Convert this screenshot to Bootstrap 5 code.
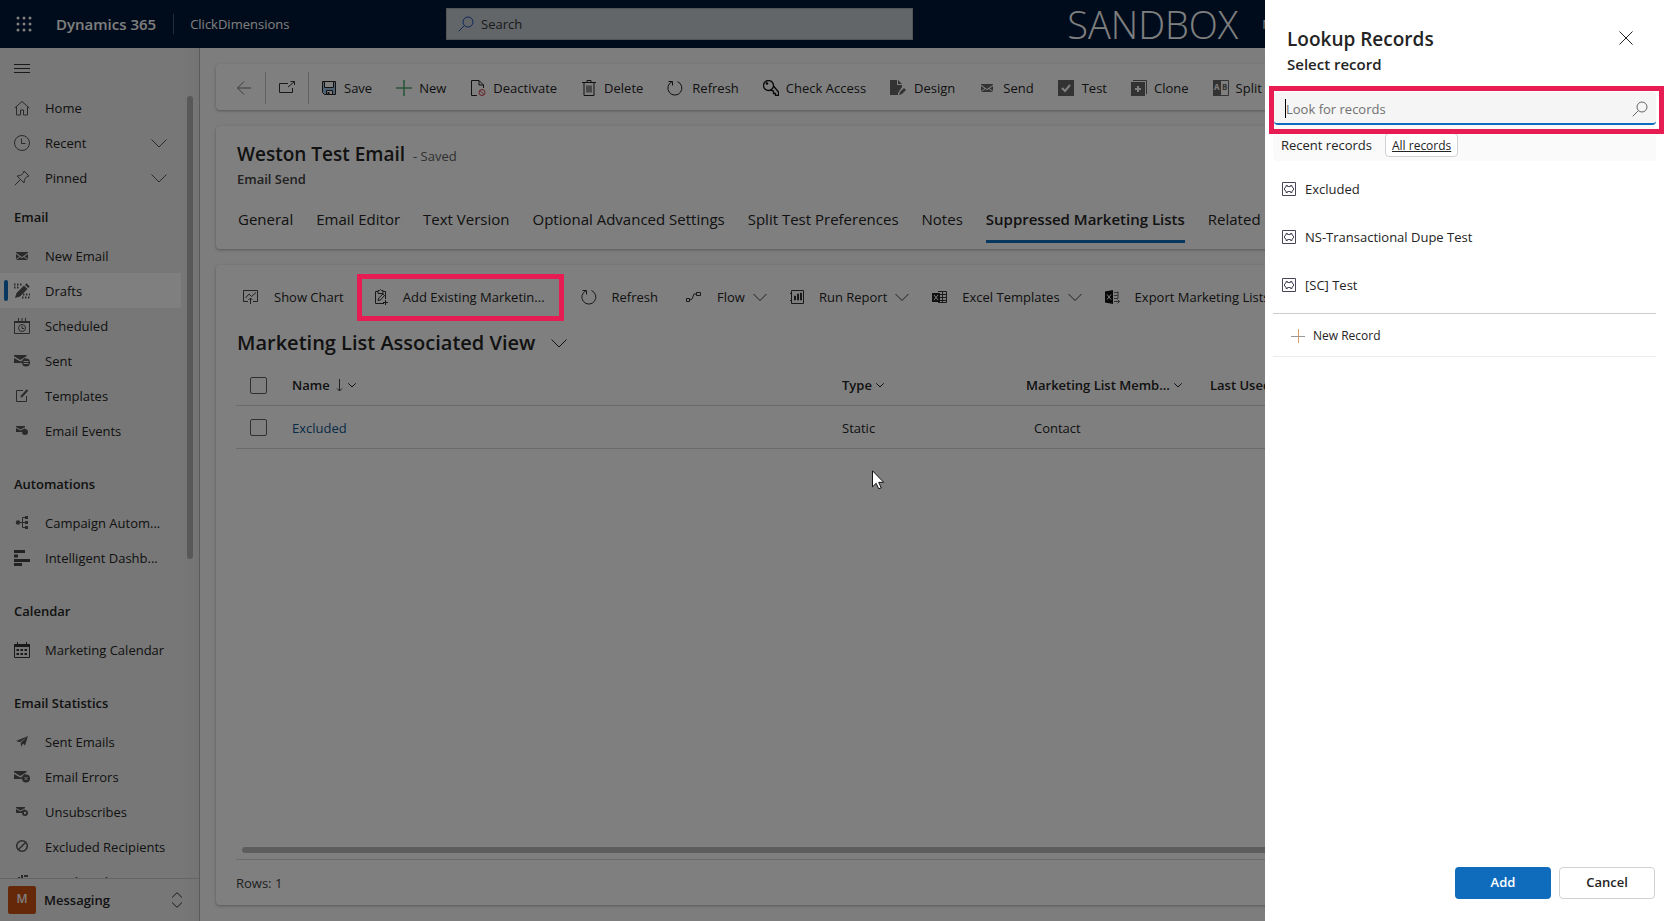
<!DOCTYPE html>
<html lang="en">
<head>
<meta charset="utf-8">
<meta name="viewport" content="width=device-width, initial-scale=1">
<title>Weston Test Email - Dynamics 365</title>
<link href="https://cdn.jsdelivr.net/npm/bootstrap@5.3.0/dist/css/bootstrap.min.css" rel="stylesheet">
<style>
:root { --navy:#001838; --blue:#0f6cbd; --pink:#e61c53; --ink:#242424; --rule:#d6d6d6; }
body { font-family:"Open Sans","Noto Sans",sans-serif; font-size:13px; line-height:20px; color:var(--ink); background:#fafafa; }
svg { flex:none; display:block; }
button { color:inherit; font:inherit; }
.app { height:100vh; }
.plain-btn { border:0; background:none; padding:0; display:inline-flex; align-items:center; white-space:nowrap; }

/* top bar */
.topbar { height:48px; background:var(--navy); color:#fff; }
.brand { font-size:15px; font-weight:600; margin-left:24px; }
.brand-rule { width:1px; height:20px; background:#46586f; margin:0 16px 0 17px; }
.find-box { left:446px; width:467px; height:32px; background:#c5ccd3; border:1px solid #a8a8a8; padding:0 8px; gap:4px; }
.find-box input { border:0; background:none; padding:0; color:#242424; font-size:13px; width:100%; }
.find-box input::placeholder { color:#333; opacity:1; }
.env-name { font-size:38px; font-weight:300; line-height:46px; }
.env-block { margin-right:401px; gap:24px; white-space:nowrap; }

/* site map */
.sitemap { width:200px; background:linear-gradient(90deg,#efefef 180px,#e8e8e8); border-right:1px solid #b4b4b4; }
.sitemap-scroll { overflow:hidden; }
.menu-toggle { height:42px; padding-left:14px; }
.site-link { height:35px; padding-left:14px; gap:15px; color:var(--ink); text-decoration:none; width:181px; font-size:13px; white-space:nowrap; }
.site-link .expander { margin-right:14px; }
.site-link.on { background:#fff; position:relative; }
.site-link.on::before { content:""; position:absolute; left:4px; top:7px; width:4px; height:21px; border-radius:2px; background:var(--blue); }
.site-link svg { color:#555; }
.site-head { height:43px; line-height:42px; padding:1px 0 0 14px; font-size:13px; font-weight:600; margin:14px 0 0; }
.site-head.first { margin-top:0; }
.sitemap-thumb { position:absolute; right:6px; top:48px; width:6px; height:463px; border-radius:3px; background:#b0b0b0; }
.area-switch { height:44px; border-top:1px solid #c8c8c8; padding:0 16px 0 8px; font-weight:600; font-size:13px; }
.area-tile { width:28px; height:28px; border-radius:2px; background:#ca5010; color:#fff; font-size:12px; line-height:26px; text-align:center; margin-right:8px; }

/* work area */
.work { padding:16px; gap:16px; overflow:hidden; }
.pane { background:#fff; border-radius:4px; box-shadow:0 1px 3px rgba(0,0,0,.3); }
.cmds { height:46px; padding:2px 0 0 20px; overflow:hidden; }
.cmds .plain-btn { gap:7px; margin-right:24px; }
.cmds .nav-btn { margin-right:13px; }
.cmd-rule { width:1px; height:32px; background:#c4c4c4; margin-right:13px; }
.record { padding:16px 21px 0; height:123px; }
.record h1 { font-size:19px; font-weight:600; line-height:24px; margin:0; }
.saved { color:#616161; }
.record-type { font-weight:600; color:#424242; line-height:26px; }
.tabs { gap:23px; padding:16px 0 0 1px; }
.tabs a { color:var(--ink); text-decoration:none; font-size:15px; line-height:22px; white-space:nowrap; height:35px; }
.tabs a.on { font-weight:600; border-bottom:3px solid var(--blue); }
.grid-pane { padding:0 20px; }
.grid-cmds { height:64px; padding-left:7px; white-space:nowrap; }
.grid-cmds .plain-btn { gap:15px; margin-right:28px; }
.grid-cmds .chart-btn { margin-right:30px; }
.grid-cmds .drop { gap:8px; margin-right:23px; }
.grid-cmds .drop span { margin-left:7px; }
.callout { position:relative; }
.callout::after { content:""; position:absolute; border:5px solid var(--pink); z-index:1046; pointer-events:none; }
.add-existing::after { inset:-13px -19px -14px -17px; }
.view-name { font-size:20px; font-weight:600; line-height:28px; padding-left:1px; gap:16px; margin-bottom:7px; }
.rows { table-layout:fixed; margin:0; --bs-table-bg:transparent; font-size:13px; width:1450px; color:var(--ink); }
.rows > :not(caption) > * > * { padding:2px 12px 0; border-bottom:1px solid var(--rule); white-space:nowrap; vertical-align:middle; color:var(--ink); }
.rows th { height:41px; font-weight:600; }
.rows td { height:43px; }
.rows a { color:#0f548c; text-decoration:none; }
.rows .form-check-input { width:17px; height:17px; margin:0 0 0 2px; border:1px solid #616161; border-radius:2px; display:block; }
.rows td.inset-cell { padding-left:20px; }
.col-check { width:44px; }
.col-name { width:550px; }
.col-type { width:184px; }
.h-thumb { height:6px; border-radius:3px; background:#bbb; margin:0 0 6px 6px; }
.row-count { border-top:1px solid var(--rule); height:46px; line-height:46px; color:#424242; }

/* overlay and lookup panel */
.scrim { position:fixed; inset:0; background:rgba(0,0,0,.5); z-index:1040; }
.lookup { position:fixed; top:0; right:0; bottom:0; width:410px; background:#fff; z-index:1045; padding:0 19px 0 8px; }
.lookup-top { padding:26px 23px 0 14px; height:92px; }
.lookup-top h2 { font-size:19px; font-weight:600; line-height:26px; margin:0; }
.lookup-top p { font-size:15px; font-weight:600; line-height:24px; margin:0; }
.look-box { height:33px; margin-left:1px; background:#f5f5f5; border-bottom:2px solid var(--blue); border-radius:4px; padding:2px 8px 0 11px; }
.look-box::after { inset:-6px -8px -11px -5px; }
.look-box input { border:0; outline:0; background:none; padding:0; flex:1; min-width:0; }
.look-box input::placeholder { color:#707070; opacity:1; }
.text-caret { width:1px; height:19px; background:#000; }
.scope { height:36px; background:#fafafa; border-radius:4px; padding:4px 8px 0; gap:13px; }
.all-btn { height:24px; padding:1px 6px 0; font-size:12px; background:#fff; border:1px solid #d1d1d1; border-radius:4px; text-decoration:underline; }
.hit { height:48px; padding-left:8px; gap:8px; width:100%; }
.hits { padding:4px 0; border-bottom:1px solid #ccc; }
.new-rec { height:43px; width:100%; padding:1px 0 0 18px; gap:8px; font-size:12px; border-bottom:1px solid #ebebeb; }
.lookup-foot { gap:8px; padding:0 1px 22px 0; }
.lookup-foot .btn { width:96px; height:32px; padding:0; font-size:13px; font-weight:600; border-radius:4px; }
.add-btn { background:var(--blue); color:#fff; }
.cancel-btn { background:#fff; border:1px solid #d1d1d1; color:var(--ink); }
.pointer { position:fixed; left:872px; top:470px; z-index:1050; }
</style>
</head>
<body>
<svg width="0" height="0" class="position-absolute" aria-hidden="true">
 <defs>
 <g id="chev" fill="none" stroke="currentColor"><path d="M.5 4.500 8 12l7.500-7.500"/></g>
 <g id="mail"><path fill="currentColor" d="M2 4h12v.8L8 9 2 4.800zM2 6l3.500 2.500L2 11zM14 6l-3.500 2.500L14 11zM2 12l4.300-3 1.700 1.200L9.700 9 14 12z"/></g>
 <g id="mailsm"><path fill="currentColor" d="M2 3h9v1L6.500 6.500 2 4zM2 5l4.500 2.500L11 5v1a4 4 0 0 0-3 3H2z"/><circle cx="11" cy="9" r="3" fill="currentColor"/></g>
 <g id="mailbig"><path fill="currentColor" d="M0 2h12.500v1.200L6.300 7 0 3.200zM0 5l6.300 3.500 6-3.500a4.500 4.500 0 0 0-4.500 5H0z"/><circle cx="12" cy="9.500" r="4" fill="currentColor"/></g>
 <g id="refresh" fill="none" stroke="currentColor"><path d="M10.500 1.600A7 7 0 1 1 5 1.700M1.500 1.500H5.500V5.500"/></g>
 <g id="rec" fill="none" stroke="#4a4458"><path d="M1.500 1.500h13v13h-13z"/><path d="M5 4.500h1.500v1h3v-1H11V6l1.500 1v2L11 10v1.500H9.500v-1h-3v1H5V10L3.500 9V7L5 6z"/></g>
 <g id="lens" fill="none" stroke="currentColor"><circle cx="10" cy="6" r="5"/><path d="M6.300 9.700.7 15.300"/></g>
 </defs>
</svg>

<div class="app d-flex flex-column overflow-hidden">
 <header class="topbar d-flex align-items-center flex-shrink-0 position-relative">
  <button class="plain-btn ms-3" aria-label="App launcher"><svg width="16" height="16" fill="#fff"><circle cx="2" cy="2" r="1.500"/><circle cx="8" cy="2" r="1.500"/><circle cx="14" cy="2" r="1.500"/><circle cx="2" cy="8" r="1.500"/><circle cx="8" cy="8" r="1.500"/><circle cx="14" cy="8" r="1.500"/><circle cx="2" cy="14" r="1.500"/><circle cx="8" cy="14" r="1.500"/><circle cx="14" cy="14" r="1.500"/></svg></button>
  <span class="brand">Dynamics 365</span><span class="brand-rule"></span><span>ClickDimensions</span>
  <label class="find-box position-absolute d-flex align-items-center"><svg width="22" height="16" viewBox="-3 0 22 16" color="#1c4fae"><use href="#lens"/></svg><input type="search" placeholder="Search" aria-label="Search"></label>
  <div class="env-block d-flex align-items-center ms-auto"><span class="env-name">SANDBOX</span><span>M</span></div>
 </header>

 <div class="d-flex flex-grow-1 overflow-hidden">
  <nav class="sitemap d-flex flex-column flex-shrink-0 position-relative">
   <div class="sitemap-scroll flex-grow-1">
    <button class="plain-btn menu-toggle" aria-label="Menu"><svg width="16" height="12" stroke="#333"><path d="M0 1.500h16M0 5.500h16M0 9.500h16"/></svg></button>
    <a href="#" class="site-link d-flex align-items-center"><svg width="16" height="16" fill="none" stroke="currentColor"><path d="M.7 8 8 1.500 15.300 8M2.500 7v8h4v-5h3v5h4V7"/></svg>Home</a>
    <a href="#" class="site-link d-flex align-items-center"><svg width="16" height="16" fill="none" stroke="currentColor"><circle cx="8" cy="8" r="7.500"/><path d="M7.500 3.500v5h4"/></svg><span class="flex-grow-1">Recent</span><svg class="expander" width="16" height="16"><use href="#chev"/></svg></a>
    <a href="#" class="site-link d-flex align-items-center"><svg width="16" height="16" fill="none" stroke="currentColor"><path d="m10 1 5 5-2 .5L10.500 9.500l-.5 3.500L3 6l3.500-.5L9.500 3zM6.300 9.700.7 15.300"/></svg><span class="flex-grow-1">Pinned</span><svg class="expander" width="16" height="16"><use href="#chev"/></svg></a>
    <h2 class="site-head first">Email</h2>
    <a href="#" class="site-link d-flex align-items-center"><svg width="16" height="16"><use href="#mail"/></svg>New Email</a>
    <a href="#" class="site-link on d-flex align-items-center"><svg width="16" height="16"><path fill="currentColor" d="m1 15 1.500-5L10 2.500 13.500 6 6 13.500zM11 1.800l1.500-1.500L15.700 3.500 14.200 5z"/><path stroke="currentColor" stroke-width="2" stroke-dasharray="1.500 1.500" d="M0 1.500h8M0 4.500h5M9 11.500h7M8 14.500h8"/></svg>Drafts</a>
    <a href="#" class="site-link d-flex align-items-center"><svg width="16" height="16" fill="none" stroke="currentColor"><path d="M.5 4v11.500h15V4M4.500 0v3M8 0v3M11.500 0v3"/><path stroke-width="2" d="M0 4h16"/><circle cx="8" cy="10" r="3.500"/><path d="M8 8v2.500h2"/></svg>Scheduled</a>
    <a href="#" class="site-link d-flex align-items-center"><svg width="16" height="16"><use href="#mailbig"/><path stroke="#eee" d="M9.500 8.500h5M9.500 10.500h5"/></svg>Sent</a>
    <a href="#" class="site-link d-flex align-items-center"><svg width="16" height="16" fill="none" stroke="currentColor"><path d="M9 2.500H2.500v11h10V8"/><path stroke-width="2" d="M7 9l6.500-7"/></svg>Templates</a>
    <a href="#" class="site-link d-flex align-items-center"><svg width="16" height="16"><use href="#mailsm"/></svg>Email Events</a>
    <h2 class="site-head">Automations</h2>
    <a href="#" class="site-link d-flex align-items-center"><svg width="16" height="16"><path fill="none" stroke="currentColor" d="M4 7.500h8M12 2.500H8.500v10H12"/><circle cx="4" cy="7.500" r="2.200" fill="currentColor"/><path fill="currentColor" d="M11 1h3v3h-3zM11 6h3v3h-3zM11 11h3v3h-3z"/></svg>Campaign Autom...</a>
    <a href="#" class="site-link d-flex align-items-center"><svg width="16" height="16" fill="#444"><path d="M0 0h11v3H0zM0 4.500h4v3H0zM0 9h16v3H0zM0 13h8v3H0z"/></svg>Intelligent Dashb...</a>
    <h2 class="site-head">Calendar</h2>
    <a href="#" class="site-link d-flex align-items-center"><svg width="16" height="16" fill="none" stroke="#333"><path d="M.5 3v12.500h15V3M3.500 0v3M12.500 0v3"/><path stroke-width="3" d="M0 3.500h16"/><path stroke-width="2" stroke-dasharray="2.500 1.500" d="M2.500 8h11M2.500 12h11"/></svg>Marketing Calendar</a>
    <h2 class="site-head">Email Statistics</h2>
    <a href="#" class="site-link d-flex align-items-center"><svg width="16" height="16" fill="currentColor"><path d="M14 2 2 7l4 1.200zM14 2 6.800 8.800 7 13l2-3.500 2 2z"/></svg>Sent Emails</a>
    <a href="#" class="site-link d-flex align-items-center"><svg width="16" height="16"><use href="#mailbig"/><path stroke="#eee" d="m10.500 8 3 3m0-3-3 3"/></svg>Email Errors</a>
    <a href="#" class="site-link d-flex align-items-center"><svg width="16" height="16"><use href="#mailsm"/><circle cx="11" cy="9" r="1.200" fill="#eee"/></svg>Unsubscribes</a>
    <a href="#" class="site-link d-flex align-items-center"><svg width="16" height="16" fill="none" stroke="currentColor" stroke-width="1.500"><circle cx="8" cy="7" r="5.300"/><path d="m4.500 10.500 7-7"/></svg>Excluded Recipients</a>
    <a href="#" class="site-link d-flex align-items-center"><svg width="16" height="16" fill="none" stroke="currentColor" stroke-width="2"><path d="M2 4v8M5 3v9M8 1v11M10 2h4M10 5h3"/></svg>Email Analytics R...</a>
   </div>
   <div class="sitemap-thumb"></div>
   <button class="plain-btn area-switch"><span class="area-tile">M</span>Messaging<svg class="ms-auto" width="12" height="16" fill="none" stroke="#333"><path d="M1 5.500 6 .7l5 4.800M1 10.500l5 4.800 5-4.800"/></svg></button>
  </nav>

  <main class="work flex-grow-1 d-flex flex-column">
   <div class="pane cmds d-flex align-items-center flex-shrink-0">
    <button class="plain-btn nav-btn" aria-label="Back"><svg width="16" height="16" fill="none" stroke="#777"><path d="M8 1.500 1.500 8 8 14.500M1.500 8H15"/></svg></button><span class="cmd-rule"></span>
    <button class="plain-btn nav-btn" aria-label="Open in new window"><svg width="16" height="16" fill="none" stroke="#333"><path d="M9 3.500H.5v9h13V8M9 7l6-5M11.500 1.500h4V5"/></svg></button><span class="cmd-rule"></span>
    <button class="plain-btn"><svg width="15" height="16" fill="none" stroke="#222"><path fill="#9dc4e8" d="M.5 1.500h13v13h-11l-2-2z"/><path fill="#fff" d="M2.500 1.500h9v6h-9zM4.500 10.500h6v4h-6z"/><path stroke-width="2" d="M6.500 12v3"/></svg>Save</button>
    <button class="plain-btn"><svg width="16" height="16" stroke="#4fa870" stroke-width="1.500"><path d="M8 0v16M0 8h16"/></svg>New</button>
    <button class="plain-btn"><svg width="16" height="16" fill="none" stroke="#222"><path d="M7 15.500H1.500V.5H9L13.500 5v3M9 .5V5h4.500"/><g stroke="#c8404a"><circle cx="12" cy="12.500" r="3"/><path d="m10 10.500 4 4"/></g></svg>Deactivate</button>
    <button class="plain-btn"><svg width="16" height="16" fill="none" stroke="#222"><path d="M1 2.500h14M6 2V.5h4V2M3 3v12.500h10V3M6 5.500v7M8 5.500v7M10 5.500v7"/></svg>Delete</button>
    <button class="plain-btn"><svg width="18" height="16" color="#222"><use href="#refresh"/></svg>Refresh</button>
    <button class="plain-btn"><svg width="16" height="16" fill="none" stroke="#111" stroke-width="1.300"><circle cx="5.500" cy="5.500" r="5"/><circle cx="4" cy="3.500" r=".7"/><path d="M10.500 6 15.500 12v3.500H12.500v-2h-2v-2.500L7 10.200"/></svg>Check Access</button>
    <button class="plain-btn"><svg width="17" height="16" fill="#666"><path d="M0 0h7v5h5v2l-4 6v2H0zM8 0l4 4H8zM9 15l1-3 4-4 2 2-4 4z"/></svg>Design</button>
    <button class="plain-btn"><svg width="17" height="16" color="#666"><use href="#mail"/></svg>Send</button>
    <button class="plain-btn"><svg width="17" height="16"><path fill="#666" d="M0 0h16v16H0z"/><path fill="none" stroke="#fff" stroke-width="2" d="m4 8 3 3 5-6"/></svg>Test</button>
    <button class="plain-btn"><svg width="16" height="16"><path fill="#666" d="M0 2h14v14H0z"/><path fill="none" stroke="#666" d="M2 .5h13.500V14"/><path stroke="#fff" stroke-width="2" d="M7 6v6M4 9h6"/></svg>Clone</button>
    <button class="plain-btn"><svg width="16" height="16"><path fill="#666" d="M0 0h8v16H0z"/><path fill="none" stroke="#666" d="M8 .5h7.500v15H8"/><text x="1" y="10" font-size="8" font-weight="700" fill="#fff">A</text><text x="9" y="10" font-size="8" font-weight="700" fill="#666">B</text></svg>Split</button>
   </div>

   <section class="pane record flex-shrink-0">
    <div class="d-flex align-items-baseline gap-2"><h1>Weston Test Email</h1><span class="saved">- Saved</span></div>
    <div class="record-type">Email Send</div>
    <nav class="tabs d-flex">
     <a href="#">General</a><a href="#">Email Editor</a><a href="#">Text Version</a><a href="#">Optional Advanced Settings</a><a href="#">Split Test Preferences</a><a href="#">Notes</a><a href="#" class="on">Suppressed Marketing Lists</a><a href="#">Related</a>
    </nav>
   </section>

   <section class="pane grid-pane flex-grow-1 d-flex flex-column">
    <div class="grid-cmds d-flex align-items-center">
     <button class="plain-btn chart-btn"><svg width="16" height="16" fill="none" stroke="#444"><path d="M5 12.500H.5v-11h14v11H10M2.500 9 6 5l2.500 2.500L13 3.500M7.500 15V9M5.500 11l2-2 2 2"/></svg>Show Chart</button>
     <button class="plain-btn callout add-existing"><svg width="14" height="16" fill="none" stroke="#333"><path d="M10 14.500H1.500v-12H4M9 2.500h2.500V10M4 4.500v-3h1.500L6.500.5l1 1H9v3zM4 11.500l.7-2.500L9 5l1.500 1.500L6.500 11zM11.500 11v5M9 13.500h5"/></svg>Add Existing Marketin...</button>
     <button class="plain-btn ms-2"><svg width="16" height="16" color="#333"><use href="#refresh"/></svg>Refresh</button>
     <button class="plain-btn drop"><svg width="16" height="16" fill="none" stroke="#333"><path d="M.5 9.500h3v3h-3zM10.500 3.500h4v3h-4zM4 11l2-1 2-5h2.500"/></svg><span>Flow</span><svg width="14" height="16" viewBox="0 0 16 16"><use href="#chev"/></svg></button>
     <button class="plain-btn drop"><svg width="14" height="16" fill="none" stroke="#333"><path d="M1.500 1.500h12v13h-12zM4.500 7v4h1V7zM7.500 5v6h1V5zM10.500 4v7h1V4zM0 4.500h1M0 11.500h1"/></svg><span>Run Report</span><svg width="14" height="16" viewBox="0 0 16 16"><use href="#chev"/></svg></button>
     <button class="plain-btn drop"><svg width="15" height="16" fill="none" stroke="#333"><path d="M6 2.500h8.500v11H6M6 5.500h8M6 8.500h8M6 11.500h8M10.500 2v11"/><path fill="#222" stroke="none" d="M0 4h8v9H0z"/><path stroke="#fff" d="m2 6 4 5M6 6l-4 5"/></svg><span>Excel Templates</span><svg width="14" height="16" viewBox="0 0 16 16"><use href="#chev"/></svg></button>
     <button class="plain-btn"><svg width="15" height="16" fill="none" stroke="#666"><path fill="#111" stroke="none" d="M0 2.500 8 1v14L0 13.500z"/><path stroke="#fff" d="m2 5.500 4 5M6 5.500l-4 5"/><path d="M9 3.500h4M9 6.500h4M9 9.500h4v-7M9 12.500h6M12.500 10.500l2 2-2 2"/></svg>Export Marketing Lists</button>
    </div>
    <div><button class="plain-btn view-name">Marketing List Associated View<svg width="16" height="16"><use href="#chev"/></svg></button></div>
    <div class="flex-grow-1 overflow-hidden">
     <table class="table rows">
      <colgroup><col class="col-check"><col class="col-name"><col class="col-type"><col class="col-type"><col></colgroup>
      <thead><tr>
       <th><input class="form-check-input" type="checkbox" aria-label="Select all rows"></th>
       <th><span class="d-flex align-items-center">Name<svg class="ms-1" width="10" height="14" fill="none" stroke="#444"><path d="M5.500 1v12M3 10.500 5.500 13 8 10.500"/></svg><svg class="ms-1" width="8" height="8" viewBox="0 0 16 16" stroke-width="2"><use href="#chev"/></svg></span></th>
       <th><span class="d-flex align-items-center gap-1">Type<svg width="8" height="8" viewBox="0 0 16 16" stroke-width="2"><use href="#chev"/></svg></span></th>
       <th><span class="d-flex align-items-center gap-1">Marketing List Memb...<svg width="8" height="8" viewBox="0 0 16 16" stroke-width="2"><use href="#chev"/></svg></span></th>
       <th>Last Used</th></tr></thead>
      <tbody><tr>
       <td><input class="form-check-input" type="checkbox" aria-label="Select Excluded"></td>
       <td><a href="#">Excluded</a></td><td>Static</td><td class="inset-cell">Contact</td><td></td></tr></tbody>
     </table>
    </div>
    <div class="h-thumb"></div>
    <div class="row-count">Rows: 1</div>
   </section>
  </main>
 </div>
</div>

<div class="scrim"></div>

<aside class="lookup d-flex flex-column" role="dialog" aria-labelledby="lookup-title">
 <div class="lookup-top d-flex justify-content-between align-items-start">
  <div><h2 id="lookup-title">Lookup Records</h2><p>Select record</p></div>
  <button class="plain-btn mt-1" aria-label="Close"><svg width="14" height="16" fill="none" stroke="#222"><path d="m.5 1.500 13 13M13.500 1.500l-13 13"/></svg></button>
 </div>
 <label class="look-box callout d-flex align-items-center"><span class="text-caret"></span><input type="text" placeholder="Look for records" aria-label="Look for records"><svg width="16" height="16" color="#666"><use href="#lens"/></svg></label>
 <div class="scope d-flex align-items-center"><span>Recent records</span><button class="all-btn">All records</button></div>
 <div class="hits">
  <button class="plain-btn hit"><svg width="16" height="16"><use href="#rec"/></svg>Excluded</button>
  <button class="plain-btn hit"><svg width="16" height="16"><use href="#rec"/></svg>NS-Transactional Dupe Test</button>
  <button class="plain-btn hit"><svg width="16" height="16"><use href="#rec"/></svg>[SC] Test</button>
 </div>
 <button class="plain-btn new-rec"><svg width="14" height="14"><path stroke="#d9a066" d="M7.500 0v14"/><path stroke="#999" d="M0 7.500h14"/></svg>New Record</button>
 <div class="lookup-foot d-flex justify-content-end mt-auto">
  <button class="btn add-btn">Add</button><button class="btn cancel-btn">Cancel</button>
 </div>
</aside>

<svg class="pointer" width="13" height="20" viewBox="0 0 13 20"><path d="M.5.800v16l3.700-3.500 2.500 5.500 2.500-1-2.500-5.500h5z" fill="#fff" stroke="#111"/></svg>
<script src="https://cdn.jsdelivr.net/npm/bootstrap@5.3.0/dist/js/bootstrap.bundle.min.js"></script>
</body>
</html>
